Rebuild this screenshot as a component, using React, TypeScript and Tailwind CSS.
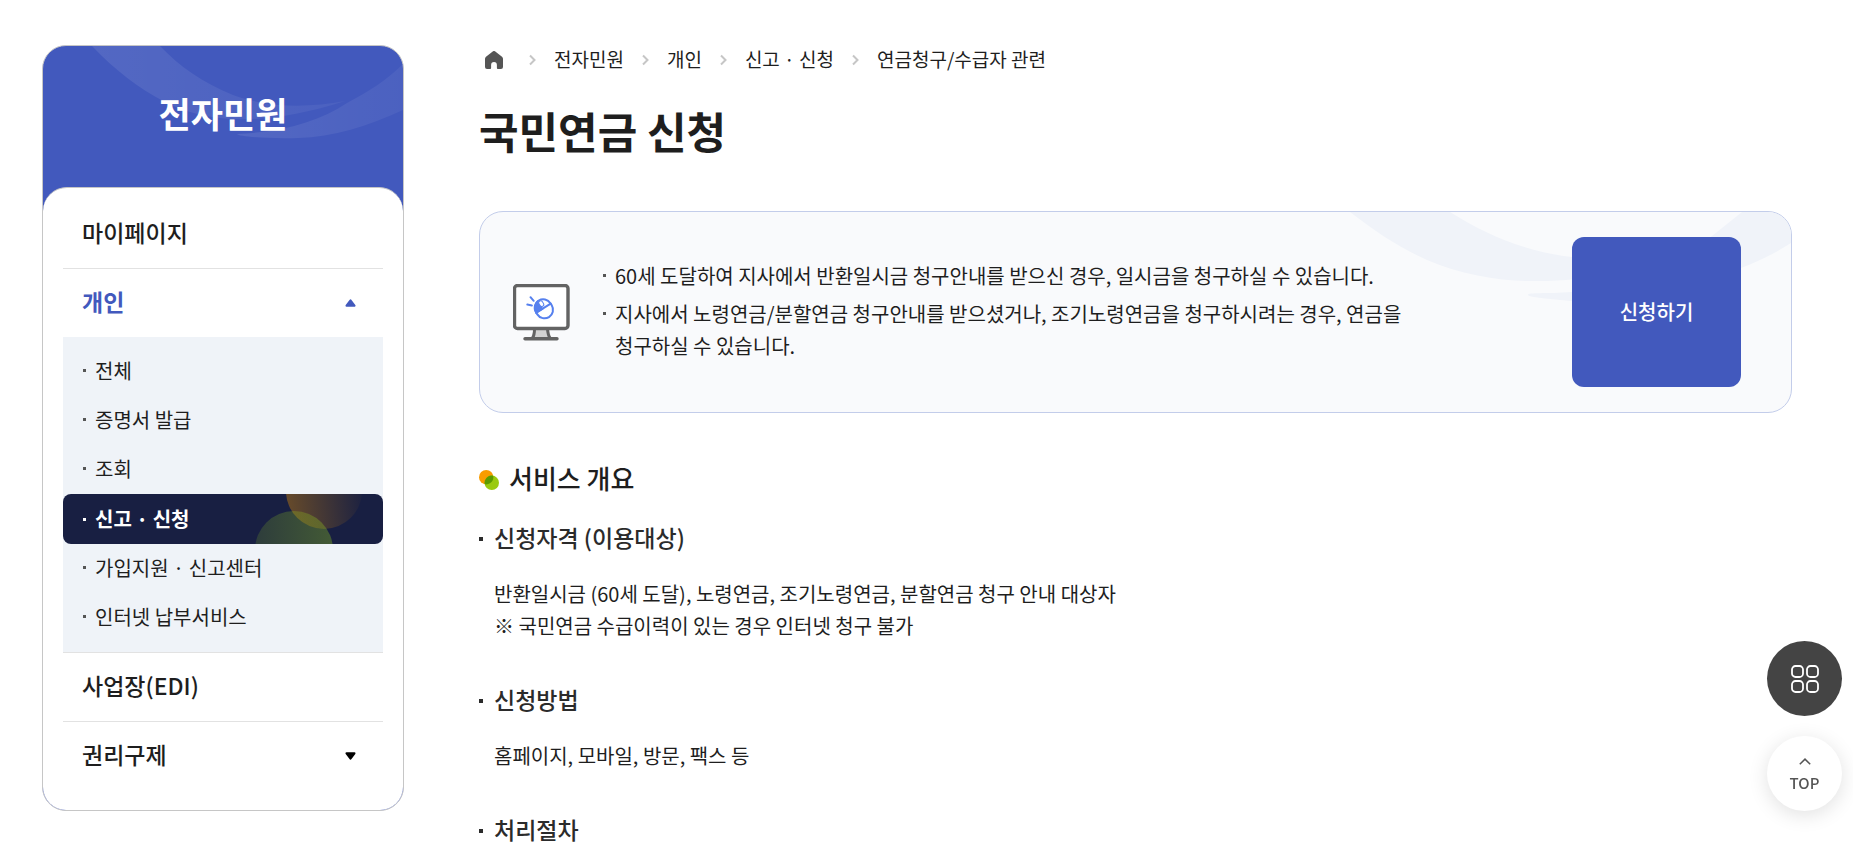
import { Fragment } from 'react';
import type { ReactNode } from 'react';

interface MenuItem {
  label: string;
  open?: boolean;
  expandable?: boolean;
  children?: string[];
}

const menu: MenuItem[] = [
  { label: '마이페이지' },
  {
    label: '개인',
    open: true,
    expandable: true,
    children: ['전체', '증명서 발급', '조회', '신고 · 신청', '가입지원 · 신고센터', '인터넷 납부서비스'],
  },
  { label: '사업장(EDI)' },
  { label: '권리구제', expandable: true },
];

const currentPage = '신고 · 신청';

const breadcrumb = ['전자민원', '개인', '신고 · 신청', '연금청구/수급자 관련'];

const notices = [
  '60세 도달하여 지사에서 반환일시금 청구안내를 받으신 경우, 일시금을 청구하실 수 있습니다.',
  '지사에서 노령연금/분할연금 청구안내를 받으셨거나, 조기노령연금을 청구하시려는 경우, 연금을 청구하실 수 있습니다.',
];

function Triangle({ up }: { up?: boolean }) {
  return (
    <svg width="11" height="8" viewBox="0 0 11 8" className={up ? '' : 'rotate-180'} aria-hidden="true">
      <path d="M5.5 1.3 9.500 6.700h-8Z" fill="currentColor" stroke="currentColor" strokeWidth="2" strokeLinejoin="round" />
    </svg>
  );
}

function HomeIcon() {
  return (
    <svg width="18" height="18" viewBox="0 0 18 18" aria-hidden="true">
      <path
        d="M7.700.5a2 2 0 0 1 2.600 0l6.700 5.200c.6.500 1 1.200 1 2V16a2 2 0 0 1-2 2h-3.200a.9.9 0 0 1-.9-.9V14a2.900 2.900 0 0 0-5.800 0v3.100a.9.9 0 0 1-.9.9H2a2 2 0 0 1-2-2V7.700c0-.8.4-1.500 1-2Z"
        fill="#555"
      />
    </svg>
  );
}

function MonitorIcon() {
  return (
    <svg width="57" height="57" viewBox="0 0 57 57" fill="none" aria-hidden="true" className="shrink-0">
      <path d="M21 45h15l2 9H18Z" fill="#d3d3d3" />
      <path d="M21.500 45c0 4-.6 7-2 9M34.500 45c.3 4 1 7 2.500 9" stroke="#636363" strokeWidth="3" />
      <rect x="1.500" y="1.500" width="53.500" height="43" rx="3" fill="#fff" stroke="#636363" strokeWidth="3.400" />
      <path d="M12 54.700h32" stroke="#636363" strokeWidth="3.400" strokeLinecap="round" />
      <g stroke="#5680ee" strokeWidth="2" strokeLinecap="round">
        <path d="m17.500 13.200 3.200 3.600M14.300 20.600l4.600.8" />
        <g transform="rotate(-32 31 25)">
          <path d="M22.500 24v-.5a8.500 8.500 0 0 1 7-8.300V24Z" fill="#5680ee" />
          <rect x="22.500" y="15" width="17" height="19.500" rx="8.500" />
          <path d="M22.500 24h17" />
          <rect x="29.500" y="16" width="4" height="6" rx="2" fill="#fff" strokeWidth="1" />
        </g>
      </g>
    </svg>
  );
}

function SideMenu() {
  return (
    <aside className="relative w-[362px] shrink-0 self-start overflow-hidden rounded-[24px] border border-[#c6c6c6] bg-[#4259bd]">
      <svg width="360" height="141" viewBox="0 0 360 141" className="absolute left-0 top-0" aria-hidden="true">
        <defs>
          <linearGradient id="header-wave" x1="0" y1="0" x2="1" y2="0">
            <stop offset="0" stopColor="#fff" stopOpacity=".09" />
            <stop offset="1" stopColor="#fff" stopOpacity=".05" />
          </linearGradient>
        </defs>
        <g fill="url(#header-wave)">
          <path d="M49 0C72 24 95 42 122 56 160 75 215 83 302 55 265 62 225 62 190 49 160 37 136 20 117 0Z" />
          <path d="M194 88C240 86 275 76 304 57 325 46 344 34 360 18V64C325 80 290 91 255 92 232 93 196 91 194 88Z" />
        </g>
      </svg>
      <h2 className="relative flex h-[141px] items-center justify-center pb-1.5 text-[35px] font-bold text-white">전자민원</h2>
      <nav className="relative rounded-t-[24px] border-t border-[#c6c6c6] bg-white px-5 pb-5 pt-3">
        <ul className="divide-y divide-[#e2e2e2]">
          {menu.map((item) => (
            <li key={item.label}>
              <a
                href="#"
                className={
                  item.open
                    ? 'flex h-[68px] items-center justify-between pb-1 pl-[19px] pr-[27px] text-[23px] font-bold text-[#4259bd]'
                    : 'flex h-[68px] items-center justify-between pb-1 pl-[19px] pr-[27px] text-[23px] font-medium text-[#1e1e1e]'
                }
              >
                {item.label}
                {item.expandable && (
                  <span className={item.open ? 'pt-1' : 'pt-1 text-black'}>
                    <Triangle up={item.open} />
                  </span>
                )}
              </a>
              {item.children && (
                <ul className="bg-[#eff3f8] py-[10px]">
                  {item.children.map((child) => (
                    <SubItem key={child} label={child} active={child === currentPage} />
                  ))}
                </ul>
              )}
            </li>
          ))}
        </ul>
      </nav>
    </aside>
  );
}

function SubItem({ label, active }: { label: string; active: boolean }) {
  if (!active) {
    return (
      <li>
        <a href="#" className="flex h-[49px] items-center gap-[9px] pb-0.5 pl-5 text-xl text-[#1e1e1e]">
          <span className="size-[3px] bg-[#555]" />
          {label}
        </a>
      </li>
    );
  }
  return (
    <li>
      <a
        href="#"
        aria-current="page"
        className="relative flex h-[50px] items-center gap-[9px] overflow-hidden rounded-lg bg-[#181f42] pl-5 text-xl font-bold text-white"
      >
        <svg width="320" height="50" viewBox="0 0 320 50" className="absolute right-0 top-0" aria-hidden="true">
          <defs>
            <linearGradient id="orb-orange" x1="0" y1=".6" x2="1" y2=".5">
              <stop offset="0" stopColor="#f39800" stopOpacity=".36" />
              <stop offset="1" stopColor="#f39800" stopOpacity=".02" />
            </linearGradient>
            <linearGradient id="orb-green" x1="0" y1="0" x2="1" y2="0">
              <stop offset="0" stopColor="#8fc31f" stopOpacity=".18" />
              <stop offset="1" stopColor="#8fc31f" stopOpacity=".36" />
            </linearGradient>
          </defs>
          <circle cx="261" cy="-3" r="38" fill="url(#orb-orange)" />
          <circle cx="231" cy="56" r="39" fill="url(#orb-green)" />
        </svg>
        <span className="size-[3px] bg-white" />
        <span className="relative">{label}</span>
      </a>
    </li>
  );
}

function Breadcrumb() {
  return (
    <nav aria-label="breadcrumb" className="flex h-6 items-center gap-[18px] pl-1.5 text-[19px] leading-6 text-[#1e1e1e]">
      <a href="#" aria-label="홈" className="mr-2">
        <HomeIcon />
      </a>
      {breadcrumb.map((name) => (
        <Fragment key={name}>
          <svg width="7" height="12" viewBox="0 0 7 12" fill="none" stroke="#c6c6c6" strokeWidth="2" aria-hidden="true">
            <path d="m1 1.500 4.500 4.500L1 10.500" />
          </svg>
          <a href="#" className="pb-0.5">{name}</a>
        </Fragment>
      ))}
    </nav>
  );
}

function NoticeBox() {
  return (
    <div className="relative mt-[53px] flex items-center overflow-hidden rounded-[24px] border border-[#c3cdea] bg-[#f9fafc] py-[25px] pl-[33px] pr-[50px]">
      <svg width="491" height="100" viewBox="0 0 491 100" className="absolute right-0 top-0" aria-hidden="true">
        <g fill="#f0f3f9">
          <path d="M50 0C76 20 100 36 127 48 165 64 205 70 238 69 290 69 330 60 360 45 330 50 300 48 272 45 225 40 185 22 150 0Z" />
          <path d="M228 83C228 80 245 82 272 80 330 72 385 45 412 24L442 0H491V31C475 41 460 49 441 56 390 82 330 92 272 89 250 87 228 85 228 83Z" />
        </g>
      </svg>
      <MonitorIcon />
      <ul className="ml-[33px] max-w-[830px] flex-1 space-y-1.5 break-keep pb-0.5 text-xl leading-8 text-[#1e1e1e]">
        {notices.map((text) => (
          <li key={text} className="flex gap-[9px]">
            <span className="mt-[14px] size-[3px] shrink-0 bg-[#555]" />
            <span>{text}</span>
          </li>
        ))}
      </ul>
      <button type="button" className="relative ml-auto h-[150px] w-[169px] shrink-0 rounded-xl bg-[#4259bd] text-xl font-medium text-white">
        신청하기
      </button>
    </div>
  );
}

function Section({ title, children }: { title: string; children?: ReactNode }) {
  return (
    <section className="mb-[41px] last:mb-0">
      <h3 className="flex items-center gap-[11px] text-[23px] font-medium leading-8 text-[#2b2b2b]">
        <span className="mt-1 size-1 bg-[#2b2b2b]" />
        {title}
      </h3>
      {children && <div className="mt-[25px] pl-[15px] text-xl leading-8 text-[#1e1e1e]">{children}</div>}
    </section>
  );
}

function FloatingButtons() {
  return (
    <div className="fixed bottom-9 right-[11px] flex flex-col gap-5">
      <button type="button" aria-label="퀵메뉴" className="flex size-[75px] items-center justify-center rounded-full bg-[#444]">
        <svg width="28" height="28" viewBox="0 0 28 28" fill="none" stroke="#fff" strokeWidth="1.800" aria-hidden="true">
          <rect x="1" y="1" width="11" height="11" rx="3.500" />
          <rect x="16" y="1" width="11" height="11" rx="3.500" />
          <rect x="1" y="16" width="11" height="11" rx="3.500" />
          <rect x="16" y="16" width="11" height="11" rx="3.500" />
        </svg>
      </button>
      <button
        type="button"
        className="flex size-[75px] flex-col items-center justify-center gap-2 rounded-full bg-white pt-1 text-[15px] font-medium leading-5 text-[#555] shadow-[0_4px_20px_rgba(0,0,0,0.12)]"
      >
        <svg width="12" height="7" viewBox="0 0 12 7" fill="none" stroke="#555" strokeWidth="1.500" aria-hidden="true">
          <path d="m.8 6.300 5.200-5.200 5.200 5.200" />
        </svg>
        TOP
      </button>
    </div>
  );
}

export default function App() {
  return (
    <div className="flex gap-[75px] bg-white pl-[42px] pr-[61px] font-['Noto_Sans_CJK_KR',sans-serif]">
      <div className="flex pt-[45px]">
        <SideMenu />
      </div>
      <main className="min-w-0 flex-1 pt-12">
        <Breadcrumb />
        <h1 className="mt-[30px] text-[43px] font-bold leading-[56px] text-[#1e1e1e]">국민연금 신청</h1>
        <NoticeBox />
        <h2 className="mb-[23px] mt-[45px] flex items-center gap-[9px] text-[26px] font-medium leading-10 text-[#1e1e1e]">
          <svg width="21" height="20" viewBox="0 0 21 20" className="mt-1" aria-hidden="true">
            <circle cx="7.200" cy="7.200" r="7.200" fill="#f89c00" />
            <circle cx="12.800" cy="12.800" r="7.200" fill="#9aca0e" />
            <path d="M5.700 14.240A7.200 7.200 0 0 1 14.240 5.700 7.200 7.200 0 0 1 5.700 14.240Z" fill="#5c9a00" />
          </svg>
          서비스 개요
        </h2>
        <Section title="신청자격 (이용대상)">
          <p>반환일시금 (60세 도달), 노령연금, 조기노령연금, 분할연금 청구 안내 대상자</p>
          <p>※ 국민연금 수급이력이 있는 경우 인터넷 청구 불가</p>
        </Section>
        <Section title="신청방법">
          <p>홈페이지, 모바일, 방문, 팩스 등</p>
        </Section>
        <Section title="처리절차" />
      </main>
      <FloatingButtons />
    </div>
  );
}
